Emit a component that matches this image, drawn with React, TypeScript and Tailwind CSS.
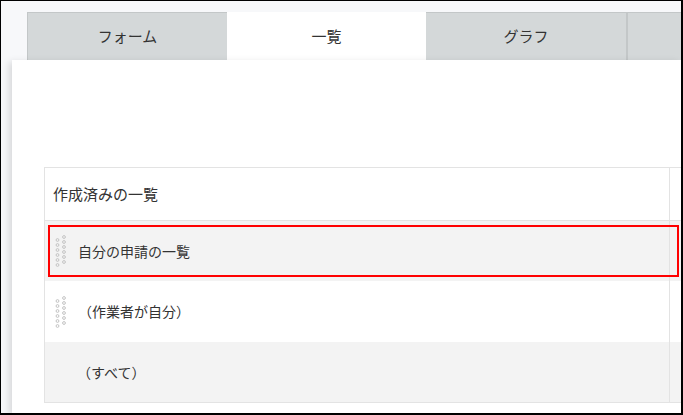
import React from 'react';

// Drag handle: two offset columns of little hollow dots
function DragHandle() {
  const rows = [0, 1, 2, 3, 4, 5];
  return (
    <svg width="12" height="32" viewBox="0 0 12 32" className="shrink-0">
      {rows.map((i) => (
        <circle key={`r${i}`} cx="9" cy={2 + i * 5} r="1.4" fill="none" stroke="#c4c4c4" strokeWidth="1" />
      ))}
      {rows.map((i) => (
        <circle key={`l${i}`} cx="2.5" cy={5 + i * 5} r="1.4" fill="none" stroke="#c4c4c4" strokeWidth="1" />
      ))}
    </svg>
  );
}

export default function App() {
  return (
    <div className="w-[683px] h-[415px] overflow-hidden flex flex-col border-t border-l border-r-2 border-b-2 border-black bg-[#f7f8fa] text-[#333] font-['Noto_Sans_CJK_JP',sans-serif]">
      {/* tabs */}
      <div className="ml-[26px] mt-[11px] flex h-[48px] shrink-0">
        <div className="w-[200px] flex items-center justify-center bg-[#d4d8d9] border-t border-l border-[#c3c7c8] text-[15px]">
          フォーム
        </div>
        <div className="w-[199px] flex items-center justify-center bg-white text-[15px]">一覧</div>
        <div className="w-[200px] flex items-center justify-center bg-[#d4d8d9] border-t border-[#c3c7c8] text-[15px]">
          グラフ
        </div>
        <div className="flex-1 bg-[#d4d8d9] border-t border-l-2 border-[#c3c7c8]" />
      </div>

      {/* panel */}
      <div className="ml-[11px] flex-1 bg-white shadow-[-3px_2px_7px_rgba(0,0,0,0.13)] pl-[32px] pt-[107px] overflow-hidden">
        <div className="border-t border-l border-b border-[#e3e3e3]">
          <div className="h-[53px] flex border-b border-[#e3e3e3]">
            <div className="w-[625px] flex items-center pl-[8px] border-r border-[#e3e3e3] text-[15px]">
              作成済みの一覧
            </div>
          </div>
          <div className="relative h-[60px] flex bg-[#f3f3f3]">
            <div className="w-[625px] flex items-center gap-[11px] pl-[10px] border-r border-[#e3e3e3] text-[14px]">
              <DragHandle />
              <span>自分の申請の一覧</span>
            </div>
            <div className="absolute left-[3px] right-[2px] top-[4px] bottom-[4px] border-2 border-[#ff0000]" />
          </div>
          <div className="h-[61px] flex bg-white">
            <div className="w-[625px] flex items-center gap-[11px] pl-[10px] border-r border-[#e3e3e3] text-[14px]">
              <DragHandle />
              <span>（作業者が自分）</span>
            </div>
          </div>
          <div className="h-[60px] flex bg-[#f3f3f3]">
            <div className="w-[625px] flex items-center pl-[32px] border-r border-[#e3e3e3] text-[14px]">
              （すべて）
            </div>
          </div>
        </div>
      </div>
    </div>
  );
}
